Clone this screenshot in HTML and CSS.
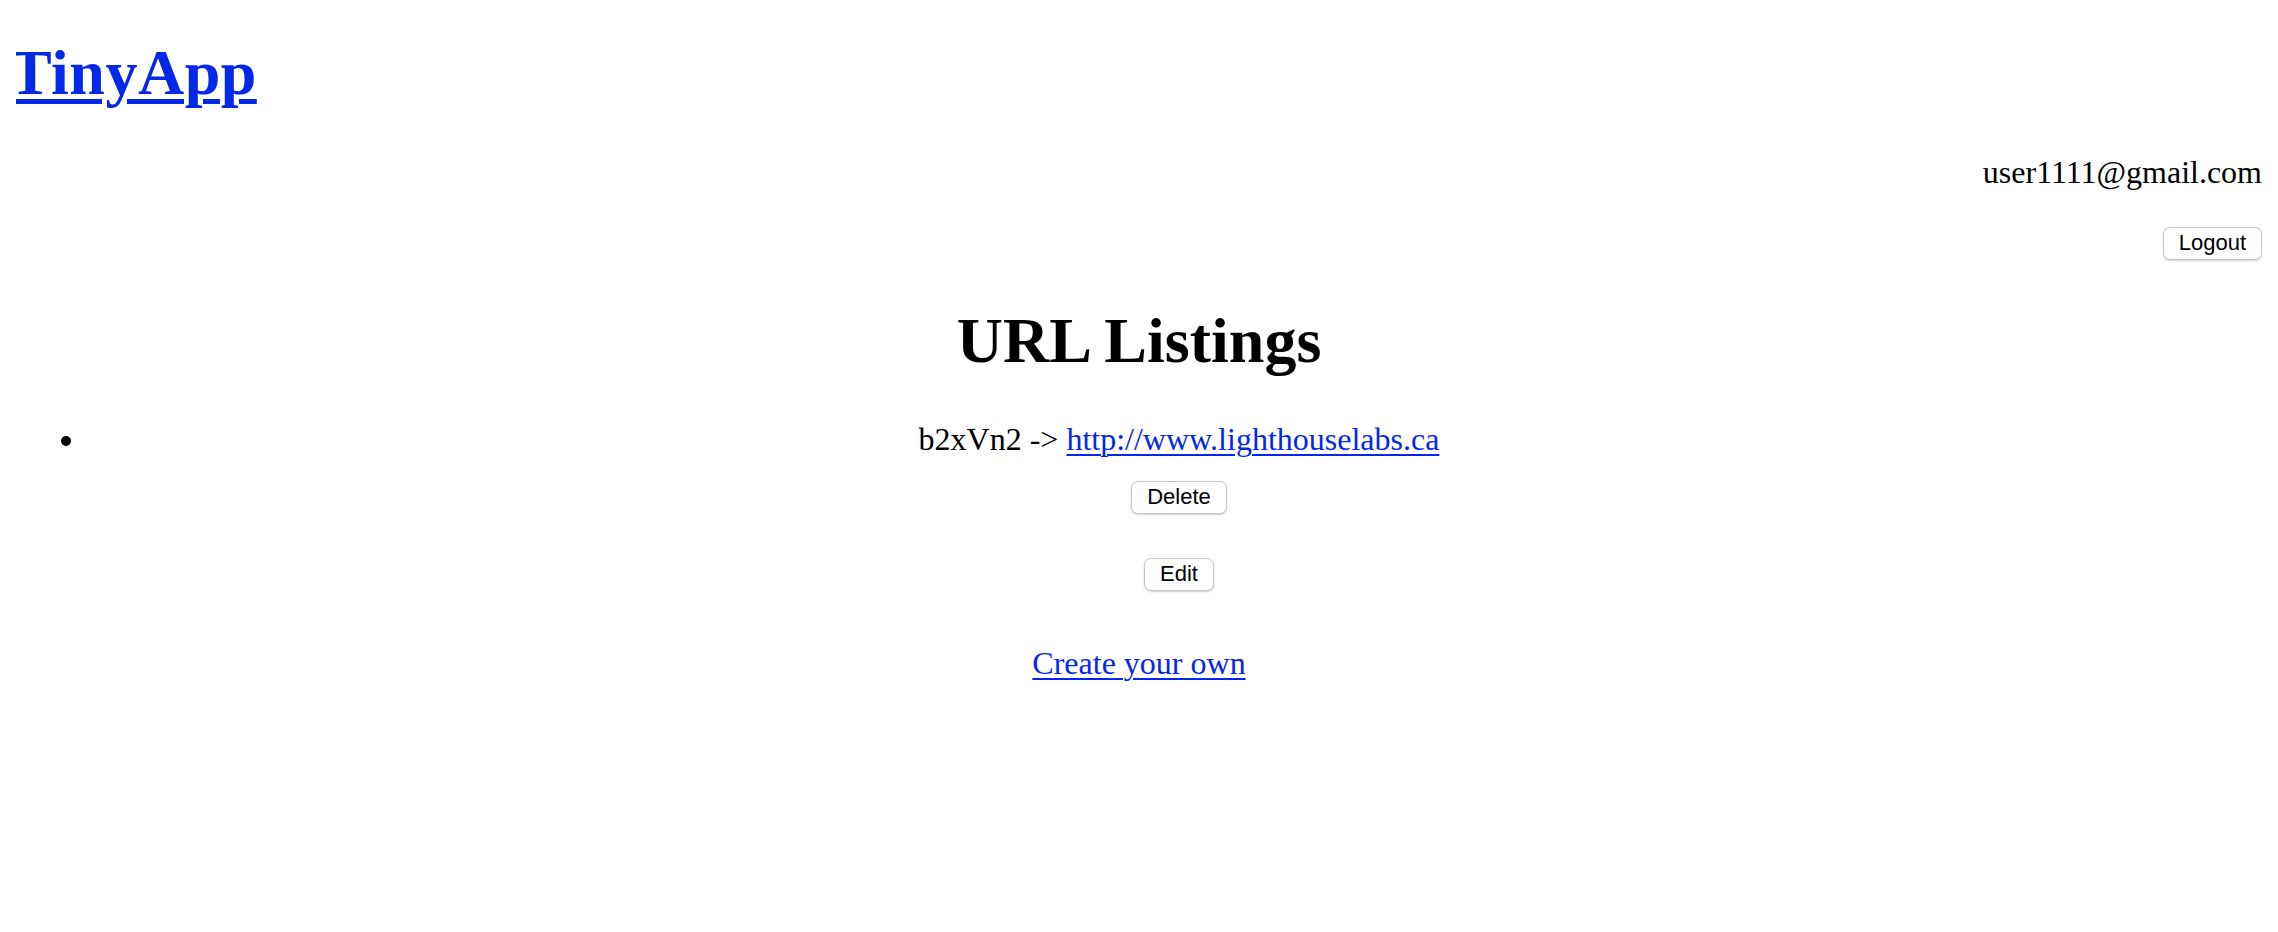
FILE: index.html
```html
<!DOCTYPE html>
<html lang="en">
<head>
<meta charset="utf-8">
<title>TinyApp</title>
<link rel="stylesheet" href="styles.css">
</head>
<body>
  <h1 class="brand"><a class="brand-link" href="#">TinyApp</a></h1>
  <div class="account">
    <div class="email">user1111@gmail.com</div>
    <form class="logout-form"><button class="btn" type="button">Logout</button></form>
  </div>
  <h1 class="title">URL Listings</h1>
  <ul class="urls">
    <li class="url-item">
      <div class="url-line">b2xVn2 -&gt; <a class="link" href="#">http://www.lighthouselabs.ca</a></div>
      <form class="item-form delete-form"><button class="btn" type="button">Delete</button></form>
      <form class="item-form edit-form"><button class="btn" type="button">Edit</button></form>
    </li>
  </ul>
  <p class="create"><a class="link" href="#">Create your own</a></p>
</body>
</html>
```

FILE: styles.css
```css
html, body {
  background: #ffffff;
}

body {
  margin: 0 16px;
  padding: 0;
  font-family: "Liberation Serif", "Times New Roman", serif;
  font-size: 32px;
  line-height: 37px;
  color: #000000;
}

.brand {
  margin: 36px 0 0 -7px;
  font-size: 64px;
  line-height: 74px;
  font-weight: bold;
  letter-spacing: 0.5px;
}

.brand-link {
  color: #0428e8;
  text-decoration: underline;
  text-decoration-thickness: 5px;
  text-underline-offset: 5px;
}

.link {
  color: #0428e8;
  text-decoration: underline;
  text-decoration-thickness: 2px;
  text-underline-offset: 4px;
}

.account {
  margin-top: 44px;
  display: flex;
  flex-direction: column;
  align-items: flex-end;
}

.email {
  line-height: 37px;
}

.logout-form {
  margin: 36px 0 0 0;
}

.btn {
  display: block;
  margin: 0;
  padding: 3px 15px 4px;
  font-family: "Liberation Sans", Arial, sans-serif;
  font-size: 22px;
  line-height: 24px;
  color: #000000;
  background: #ffffff;
  border: 1px solid #c6c6c6;
  border-radius: 7px;
  box-shadow: 0 1px 2px rgba(0, 0, 0, 0.18);
  cursor: pointer;
}

.title {
  margin: 44px 0 0 0;
  font-size: 64px;
  line-height: 74px;
  font-weight: bold;
  text-align: center;
}

.urls {
  margin: 43px 0 0 0;
  padding-left: 71px;
  text-align: center;
}

.url-item {
  list-style: disc;
  padding-left: 9px;
}

.url-line {
  line-height: 37px;
}

.item-form {
  display: flex;
  justify-content: center;
  margin: 0;
}

.delete-form {
  margin-top: 23px;
}

.edit-form {
  margin-top: 44px;
}

.create {
  margin: 54px 0 0 0;
  text-align: center;
  line-height: 37px;
}
```
